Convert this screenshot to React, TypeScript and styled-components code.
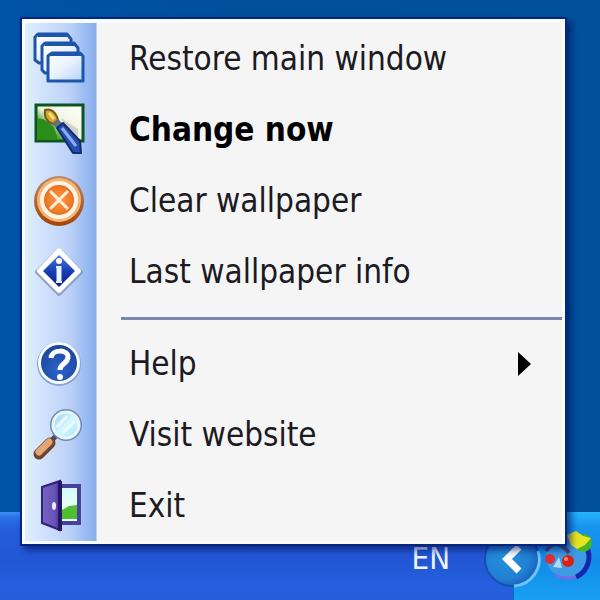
import React from "react";
import styled, { createGlobalStyle } from "styled-components";

const GlobalStyle = createGlobalStyle`
  * { box-sizing: border-box; }
  body { margin: 0; background: #004f9b; }
`;

const Desktop = styled.main`
  position: relative;
  display: flex;
  flex-direction: column;
  justify-content: flex-end;
  min-height: 100vh;
  overflow: hidden;
  background: linear-gradient(90deg, #0054a8, #004f9b 40%, #00509a);
  font-family: "DejaVu Sans Condensed", "Noto Sans", sans-serif;
`;

const Menu = styled.ul`
  position: absolute;
  z-index: 1;
  top: 17px;
  left: 20px;
  right: 33px;
  margin: 0;
  padding: 4px 3px 3px;
  list-style: none;
  border: 2px solid #06257c;
  background: linear-gradient(
        90deg,
        #e0f0ff 0,
        #cfe1fd 20px,
        #bdd2f7 44px,
        #9bbcf3 60px,
        #8baeea 71px,
        #f5f5f5 72px
      )
      content-box,
    linear-gradient(#f8fcff, #f8fcff) padding-box;
  box-shadow: 4px 4px 7px rgba(0, 15, 90, 0.65);
`;

const Item = styled.button<{ $strong?: boolean }>`
  display: grid;
  grid-template-columns: 56px 1fr 18px;
  column-gap: 43px;
  align-items: center;
  width: 100%;
  height: 71px;
  padding: 0 26px 0 5px;
  border: 0;
  background: none;
  color: ${(p) => (p.$strong ? "#000" : "#1c1a22")};
  font-family: inherit;
  font-size: 33px;
  font-weight: ${(p) => (p.$strong ? 700 : 400)};
  line-height: 40px;
  text-align: left;
  white-space: nowrap;
`;

const Icon = styled.svg`
  display: block;
  width: 56px;
  height: 56px;
`;

const Divider = styled.li`
  height: 21px;
  padding: 10px 0 0 96px;
  &::before {
    content: "";
    display: block;
    height: 3px;
    background: #7985b2;
  }
`;

const Arrow = styled.svg`
  width: 14px;
  height: 24px;
`;

const Taskbar = styled.footer`
  display: flex;
  justify-content: flex-end;
  height: 88px;
  background: linear-gradient(#3d8df5 0, #2b70e6 6px, #245fdc 16px, #2256d4 50px, #2560df 75px, #255ddb);
`;

const Language = styled.button`
  margin: 26px 62px 0 0;
  padding: 0;
  border: 0;
  background: none;
  color: #eef4ff;
  font-family: inherit;
  font-size: 31px;
  line-height: 40px;
  align-self: flex-start;
`;

const Tray = styled.div`
  position: relative;
  width: 88px;
  padding: 16px 0 0 28px;
  background: linear-gradient(#28b4fb, #1795ee 14px, #128be8 50px, #18a0f2);
  border-left: 2px solid #1269cc;
`;

const Toggle = styled.button`
  position: absolute;
  top: 17px;
  left: -32px;
  width: 60px;
  height: 60px;
  padding: 0;
  border: 0;
  background: none;
`;

const TrayArt = styled.svg`
  display: block;
  width: 60px;
  height: 60px;
`;

const WindowsIcon = () => (
  <Icon viewBox="0 0 56 56" aria-hidden="true">
    <defs>
      <linearGradient id="pane" x1="0" y1="0" x2="1" y2="1">
        <stop offset="0" stopColor="#fff" />
        <stop offset="0.5" stopColor="#e8f2ff" />
        <stop offset="1" stopColor="#b3ceff" />
      </linearGradient>
    </defs>
    <g fill="url(#pane)" stroke="#1d55ad" strokeWidth="3" strokeLinejoin="round">
      <path d="M8 3H37L41 8V32H9L5 29V6Z" />
      <path d="M15 12H44L48 17V42H15L12 39V15Z" />
      <path d="M22 22H50L53 25V50H18V25Z" />
      <path d="M8 5H38M15 14H45M20 24H52" strokeWidth="2" />
    </g>
  </Icon>
);

const PaintIcon = () => (
  <Icon viewBox="0 0 56 56" aria-hidden="true">
    <defs>
      <linearGradient id="canvas" x1="0" y1="1" x2="1" y2="0">
        <stop offset="0" stopColor="#15820f" />
        <stop offset="0.3" stopColor="#57a83d" />
        <stop offset="0.5" stopColor="#eef5dd" />
        <stop offset="1" stopColor="#fff" />
      </linearGradient>
    </defs>
    <rect x="6" y="3" width="47" height="36" fill="url(#canvas)" stroke="#0b5522" strokeWidth="3" />
    <path d="M7 17C13 15 18 20 24 25L28 38H7Z" fill="#2a8d1b" />
    <path d="M31 16L48 27V37H40Z" fill="#c9bfc2" opacity="0.7" />
    <path d="M15 8C21 6 26 10 28 18L23 22C17 20 14 15 15 8Z" fill="#d7a52b" stroke="#6f5a22" strokeWidth="2" />
    <path d="M19 11L24 17" stroke="#ffe071" strokeWidth="3" />
    <path d="M22 22L28 17L34 23L28 28Z" fill="#64717c" />
    <path d="M27 26L33 21L50 39L51 51L43 51Z" fill="#234fae" stroke="#112b71" strokeWidth="2" strokeLinejoin="round" />
    <path d="M32 26L46 44" stroke="#8eadf0" strokeWidth="3" />
  </Icon>
);

const ClearIcon = () => (
  <Icon viewBox="0 0 56 56" aria-hidden="true">
    <defs>
      <radialGradient id="orange">
        <stop offset="0" stopColor="#ff9a45" />
        <stop offset="0.7" stopColor="#f07c27" />
        <stop offset="1" stopColor="#df6518" />
      </radialGradient>
      <linearGradient id="rim" x1="0" y1="0" x2="0" y2="1">
        <stop offset="0" stopColor="#b98c66" />
        <stop offset="1" stopColor="#a54408" />
      </linearGradient>
    </defs>
    <circle cx="29" cy="28" r="25" fill="url(#rim)" />
    <circle cx="29" cy="27" r="22" fill="#f7b374" />
    <circle cx="29" cy="27" r="17" fill="url(#orange)" stroke="#fff5e5" strokeWidth="4" />
    <path d="M20 18L38 36M38 18L20 36" stroke="#fff0db" strokeWidth="3" />
  </Icon>
);

const InfoIcon = () => (
  <Icon viewBox="0 0 56 56" aria-hidden="true">
    <defs>
      <linearGradient id="gem" x1="0" y1="0" x2="0" y2="1">
        <stop offset="0" stopColor="#4b79d8" />
        <stop offset="0.5" stopColor="#183fb5" />
        <stop offset="1" stopColor="#071f8a" />
      </linearGradient>
    </defs>
    <path d="M29 6L51 28L29 50L7 28Z" fill="#8794b3" stroke="#8794b3" strokeWidth="4" strokeLinejoin="round" opacity="0.8" />
    <path d="M29 6L49 27L29 47L9 27Z" fill="#fff" stroke="#fff" strokeWidth="4" strokeLinejoin="round" />
    <path d="M29 11L45 27L29 43L13 27Z" fill="url(#gem)" />
    <circle cx="29" cy="17" r="3" fill="#fff" />
    <path d="M26 23H31M26 38H32" stroke="#e8f5ff" strokeWidth="2" />
    <path d="M29 22V39" stroke="#e8f5ff" strokeWidth="5" />
  </Icon>
);

const HelpIcon = () => (
  <Icon viewBox="0 0 56 56" aria-hidden="true">
    <defs>
      <radialGradient id="ball" cx="0.5" cy="0.7" r="0.7">
        <stop offset="0" stopColor="#2c63ce" />
        <stop offset="1" stopColor="#1b4597" />
      </radialGradient>
    </defs>
    <circle cx="29" cy="28" r="22" fill="#8ca3ce" />
    <circle cx="29" cy="27" r="21" fill="#f7fbff" />
    <circle cx="29" cy="27" r="18" fill="url(#ball)" />
    <path d="M21 22C22 13 38 13 38 21C38 28 30 27 30 34" fill="none" stroke="#fff" strokeWidth="5" />
    <circle cx="30" cy="41" r="3" fill="#fff" />
  </Icon>
);

const SearchIcon = () => (
  <Icon viewBox="0 0 56 56" aria-hidden="true">
    <defs>
      <linearGradient id="lens" x1="0" y1="0" x2="1" y2="1">
        <stop offset="0" stopColor="#8fd0ef" />
        <stop offset="0.5" stopColor="#d4f8ff" />
        <stop offset="1" stopColor="#a5e4f9" />
      </linearGradient>
    </defs>
    <path d="M20 35L26 29" stroke="#4a4e65" strokeWidth="5" />
    <path d="M9 47L20 36" stroke="#70452f" strokeWidth="11" strokeLinecap="round" />
    <path d="M9 45L19 35" stroke="#e4a677" strokeWidth="7" strokeLinecap="round" />
    <circle cx="36" cy="18" r="16" fill="#7189a9" />
    <circle cx="36" cy="18" r="13" fill="url(#lens)" stroke="#e8f7ff" strokeWidth="3" />
    <path d="M27 20L37 9M33 26L45 14" stroke="#fff" strokeWidth="3" opacity="0.65" />
  </Icon>
);

const ExitIcon = () => (
  <Icon viewBox="0 0 56 56" aria-hidden="true">
    <defs>
      <linearGradient id="door">
        <stop offset="0" stopColor="#7664c6" />
        <stop offset="0.7" stopColor="#6653b4" />
        <stop offset="1" stopColor="#47339a" />
      </linearGradient>
      <linearGradient id="view" x1="0" y1="0" x2="0" y2="1">
        <stop offset="0" stopColor="#d5f8ff" />
        <stop offset="0.6" stopColor="#eafff4" />
      </linearGradient>
    </defs>
    <rect x="29" y="6" width="22" height="41" fill="#47419b" />
    <rect x="32" y="10" width="15" height="33" fill="url(#view)" />
    <path d="M32 32L39 28L47 27V41H32Z" fill="#51bd30" />
    <path d="M12 9L30 3V52L12 45Z" fill="url(#door)" stroke="#302078" strokeWidth="2" />
    <path d="M30 3V53" stroke="#251768" strokeWidth="4" />
    <ellipse cx="24" cy="28" rx="2" ry="4" fill="#f0eaff" />
  </Icon>
);

type Entry = { label: string; icon: React.ReactNode; strong?: boolean; submenu?: boolean };

const windowActions: Entry[] = [
  { label: "Restore main window", icon: <WindowsIcon /> },
  { label: "Change now", icon: <PaintIcon />, strong: true },
  { label: "Clear wallpaper", icon: <ClearIcon /> },
  { label: "Last wallpaper info", icon: <InfoIcon /> },
];

const appActions: Entry[] = [
  { label: "Help", icon: <HelpIcon />, submenu: true },
  { label: "Visit website", icon: <SearchIcon /> },
  { label: "Exit", icon: <ExitIcon /> },
];

const MenuEntry = ({ label, icon, strong, submenu }: Entry) => (
  <li role="none">
    <Item type="button" role="menuitem" $strong={strong} aria-haspopup={submenu ? "menu" : undefined}>
      {icon}
      <span>{label}</span>
      {submenu && (
        <Arrow viewBox="0 0 14 24" aria-hidden="true">
          <path d="M0 0L13 12L0 24Z" fill="#000" />
        </Arrow>
      )}
    </Item>
  </li>
);

export default function App() {
  return (
    <Desktop>
      <GlobalStyle />
      <Menu role="menu">
        {windowActions.map((e) => <MenuEntry key={e.label} {...e} />)}
        <Divider role="separator" />
        {appActions.map((e) => <MenuEntry key={e.label} {...e} />)}
      </Menu>
      <Taskbar>
        <Language type="button">EN</Language>
        <Tray>
          <Toggle type="button" aria-label="Show hidden icons">
            <TrayArt viewBox="0 0 60 60" aria-hidden="true">
              <defs>
                <radialGradient id="disc" cx="0.4" cy="0.45" r="0.6">
                  <stop offset="0" stopColor="#2593dc" />
                  <stop offset="0.7" stopColor="#2180d4" />
                  <stop offset="1" stopColor="#1762bd" />
                </radialGradient>
              </defs>
              <circle cx="30" cy="30" r="27" fill="url(#disc)" stroke="#184eb3" strokeWidth="2" />
              <path d="M56 22A27 27 0 0 1 32 57" fill="none" stroke="#6dc5fa" strokeWidth="3" />
              <path d="M37 18L25 30L37 42" fill="none" stroke="#fff" strokeWidth="7" />
            </TrayArt>
          </Toggle>
          <TrayArt viewBox="0 0 60 60" role="img" aria-label="Wallpaper changer">
            <circle cx="25" cy="29" r="21" fill="#3c9ce5" />
            <path d="M44 18A22 22 0 0 1 34 49" fill="none" stroke="#1527ad" strokeWidth="5" />
            <path d="M13 47Q24 52 34 49" fill="none" stroke="#6f6ee2" strokeWidth="3" />
            <path d="M4 23Q14 8 27 25" fill="none" stroke="#454b79" strokeWidth="4" />
            <circle cx="8" cy="31" r="5" fill="#e02e34" />
            <circle cx="26" cy="33" r="6" fill="#d9201b" />
            <circle cx="24" cy="31" r="2" fill="#ff8b72" />
            <path d="M11 39L17 29L20 40Z" fill="#b6d9f2" />
            <circle cx="41" cy="15" r="9" fill="#45b62b" />
            <path d="M25 7L34 3L41 8L49 10L43 17L35 21L29 17Z" fill="#e9e322" />
          </TrayArt>
        </Tray>
      </Taskbar>
    </Desktop>
  );
}
